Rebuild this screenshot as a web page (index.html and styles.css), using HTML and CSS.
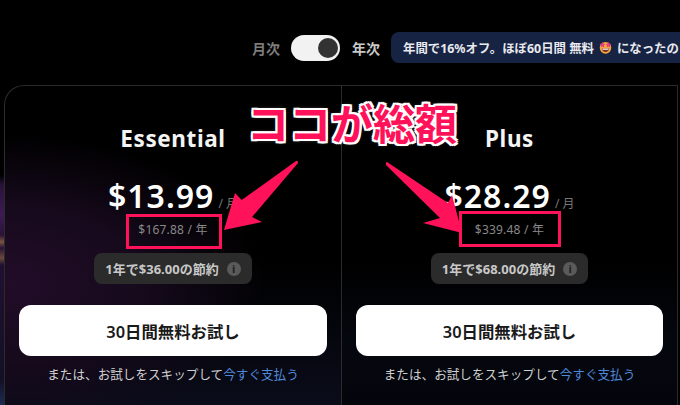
FILE: index.html
```html
<!DOCTYPE html>
<html lang="ja">
<head>
<meta charset="utf-8">
<title>Pricing</title>
<link rel="stylesheet" href="styles.css">
</head>
<body>
<div class="page">
  <div class="billing">
    <span class="period muted">月次</span>
    <span class="toggle"><span class="knob"></span></span>
    <span class="period">年次</span>
    <span class="promo">年間で16%オフ。ほぼ60日間 無料 <svg class="emoji" viewBox="0 0 14 14"><circle cx="7" cy="7.4" r="6.2" fill="#f5a63c"/><path d="M3.8 1 4.8 3 6.8 3.2 5.3 4.7 5.7 6.8 3.8 5.8 1.9 6.8 2.3 4.7.8 3.2 2.8 3ZM10.2 1 11.2 3 13.2 3.2 11.7 4.7 12.1 6.8 10.2 5.8 8.3 6.8 8.7 4.7 7.2 3.2 9.2 3Z" fill="#e23d86"/><path d="M3 7.8H11C10.8 10.4 9.1 11.8 7 11.8S3.2 10.4 3 7.8Z" fill="#7a2b1c"/><path d="M3.6 8.2H10.4L10.1 9.3H3.9Z" fill="#fff"/></svg> になったの</span>
  </div>
  <div class="plans">
    <section class="plan first">
      <h2 class="name">Essential</h2>
      <div class="price"><strong>$13.99</strong><span class="per">/ 月</span></div>
      <div class="total">$167.88 / 年</div>
      <div class="save">1年で$36.00の節約<span class="info">i</span></div>
      <button class="cta">30日間無料お試し</button>
      <p class="skip">または、お試しをスキップして<a href="#">今すぐ支払う</a></p>
    </section>
    <section class="plan second">
      <h2 class="name">Plus</h2>
      <div class="price"><strong>$28.29</strong><span class="per">/ 月</span></div>
      <div class="total">$339.48 / 年</div>
      <div class="save">1年で$68.00の節約<span class="info">i</span></div>
      <button class="cta">30日間無料お試し</button>
      <p class="skip">または、お試しをスキップして<a href="#">今すぐ支払う</a></p>
    </section>
  </div>
  <div class="frame frame-a"></div>
  <div class="frame frame-b"></div>
  <svg class="arrows" viewBox="0 0 680 405">
    <path d="M296 161Q298 160 298 163L252 217 262 222 224 230 235 193 241.7 200Z" fill="#ff1259"/>
    <path d="M387 162 448 203 452 195 462 233 423 223 440 218 386 165Q385.500 162 387 162Z" fill="#ff1259"/>
  </svg>
  <div class="headline">ココが総額</div>
</div>
</body>
</html>
```
FILE: styles.css
```css
* { box-sizing: border-box; }
html, body { margin: 0; padding: 0; background: #000; }
body { font-family: "Noto Sans", "Noto Sans CJK JP", sans-serif; color: #fff; }
.page { position: relative; width: 680px; height: 405px; overflow: hidden; background: linear-gradient(#000 175px, #2a1238 185px, #3d1b55 215px, #2a1238 235px, #7a5540 242px, #2a1238 248px, #6a4a3a 258px, #201030 265px, #141024 380px, #1c2c52 405px) no-repeat 0 0 / 4px 405px #000; }
.billing { display: flex; align-items: center; height: 85px; padding: 10px 0 0 252px; white-space: nowrap; }
.period { flex: none; font-size: 14px; font-weight: 700; color: #c8c8c8; }
.period.muted { color: #7c7c7c; }
.toggle { display: flex; flex: none; justify-content: flex-end; align-items: center; width: 49px; height: 26px; margin: 0 12px 0 11px; padding: 0 2px; border-radius: 13px; background: #f2f2f2; }
.knob { width: 20px; height: 20px; border-radius: 50%; background: #333; }
.promo { display: flex; flex: none; align-items: center; gap: 5px; width: 320px; height: 31px; margin-left: 11px; padding: 0 12px; border-radius: 8px; background: #172342; font-size: 12.4px; font-weight: 700; color: #e8eaf0; }
.emoji { width: 13px; height: 13px; }
.plans { display: grid; grid-template-columns: 337px 337px; margin-left: 4px; height: 320px; }
.plan { display: flex; flex-direction: column; align-items: center; padding: 40px 14px 0; border-top: 1px solid #2b2b2b; border-left: 1px solid #2b2b2b; }
.first { border-top-left-radius: 20px; background: radial-gradient(ellipse 260px 150px at 0 62%, #220c28 0, #170a1d 50%, transparent 100%), linear-gradient(#000 55%, #0a0c1a 100%); }
.second { border-right: 1px solid #2b2b2b; background: linear-gradient(#000 55%, #05070f 80%, #04050c); }
.name { margin: 0; font-size: 22.5px; line-height: 26px; font-weight: 700; letter-spacing: .6px; color: #f4f4f4; }
.price { display: flex; align-items: baseline; gap: 4px; height: 42px; margin-top: 23px; }
.price strong { font-size: 32px; line-height: 42px; font-weight: 600; letter-spacing: 1px; }
.per { font-size: 12px; color: #777; white-space: pre; }
.total { margin-top: 3px; font-size: 12px; line-height: 20px; letter-spacing: .2px; color: #888; }
.save { display: flex; align-items: center; gap: 8px; height: 31px; margin-top: 13px; padding: 0 11px; border-radius: 8px; background: #2b2b2b; font-size: 13px; font-weight: 700; color: #c8c8c8; }
.info { display: flex; align-items: center; justify-content: center; width: 14px; height: 14px; border-radius: 50%; background: #5a5a5a; font-size: 11px; color: #222; }
.cta { flex: none; width: 100%; height: 51px; margin-top: 21px; border: 0; border-radius: 12px; background: #fff; color: #1a1a1a; font: 600 16.4px "Noto Sans", "Noto Sans CJK JP", sans-serif; }
.skip { margin: 10px 0 0; font-size: 12.6px; line-height: 18px; color: #d0d0d0; white-space: nowrap; }
.skip a { color: #4f88d8; text-decoration: none; }
.frame { position: absolute; border: 3px solid #ff1259; }
.frame-a { left: 126px; top: 214px; width: 96px; height: 35px; }
.frame-b { left: 459px; top: 211px; width: 102px; height: 36px; }
.arrows { position: absolute; left: 0; top: 0; width: 680px; height: 405px; }
.headline { position: absolute; left: 247px; top: 94px; font-family: "Noto Sans CJK JP", sans-serif; font-size: 42px; line-height: 56px; font-weight: 700; color: #ff1259; white-space: nowrap; text-shadow: 2px 0 0 #fff, -2px 0 0 #fff, 0 2px 0 #fff, 0 -2px 0 #fff, 2px 2px 0 #fff, -2px -2px 0 #fff, 2px -2px 0 #fff, -2px 2px 0 #fff, 0 0 4px #999; }
```
